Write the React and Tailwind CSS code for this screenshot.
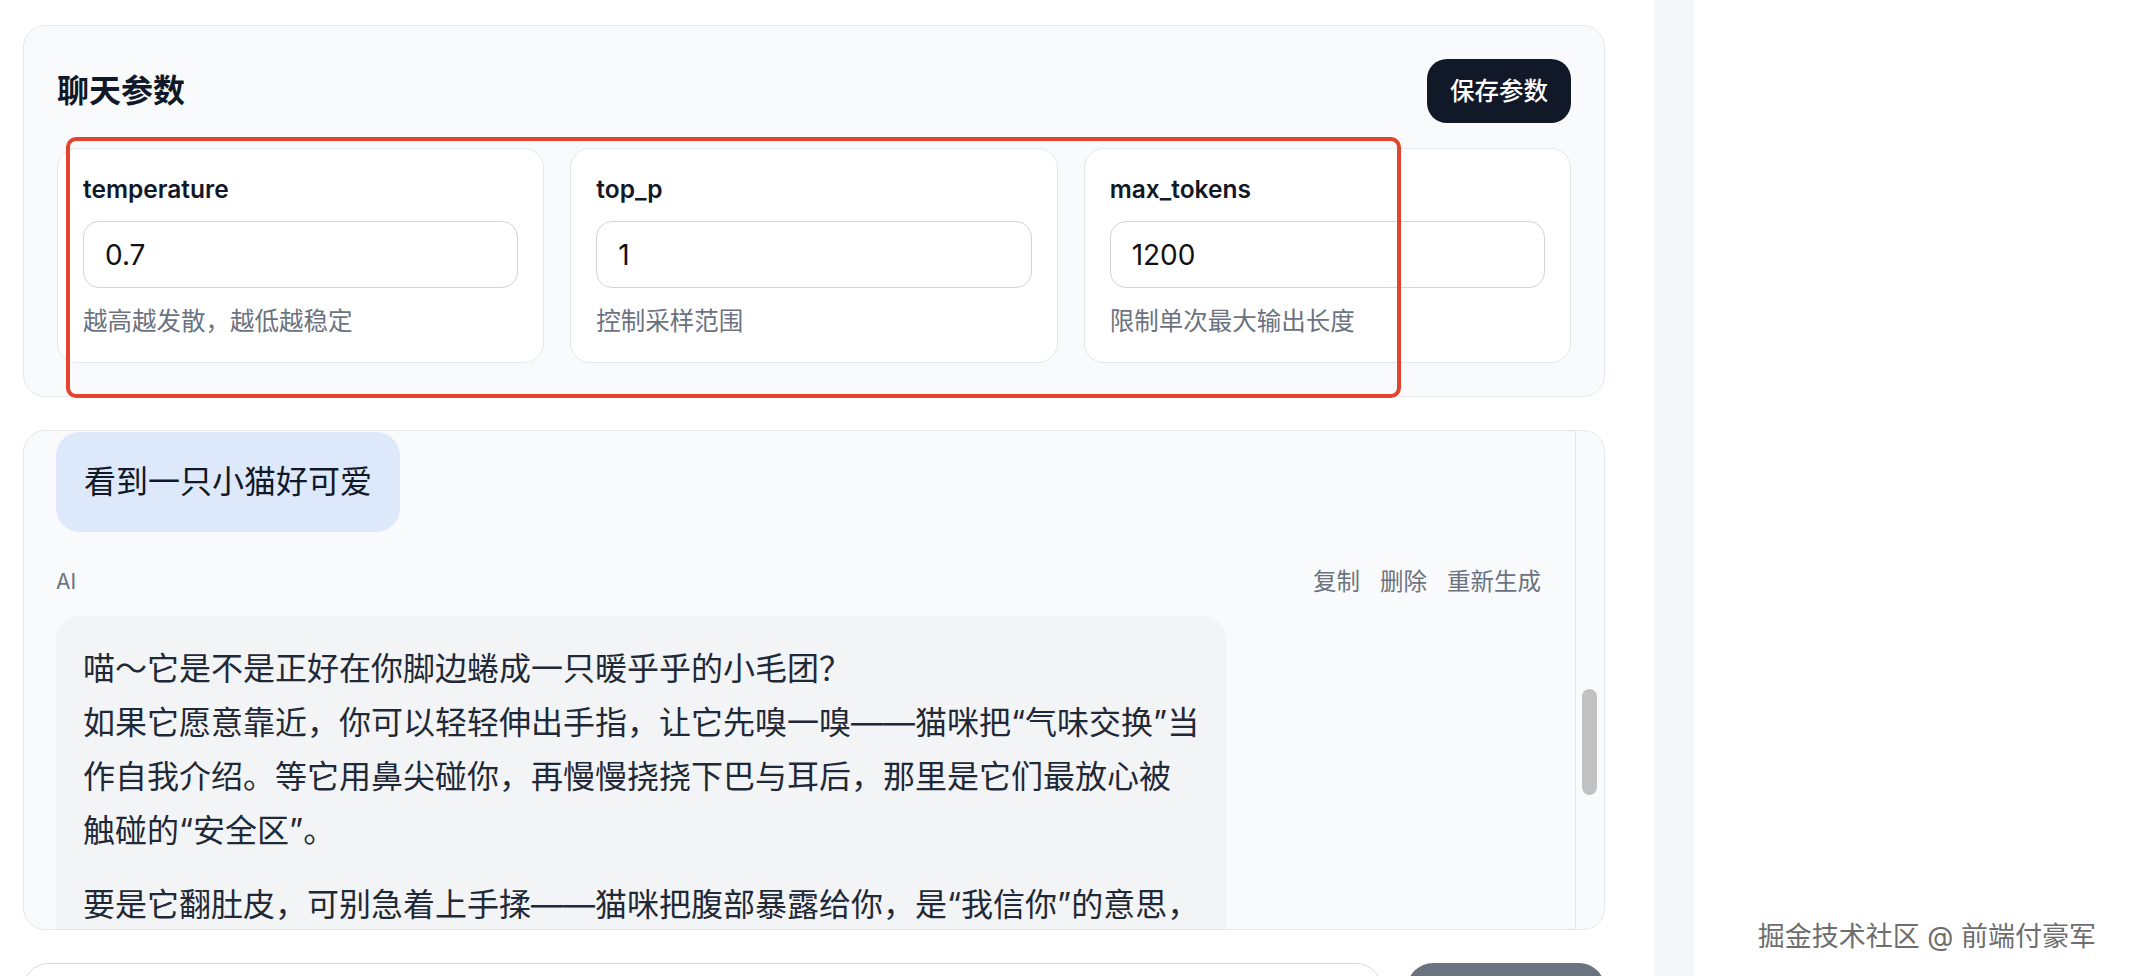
import React from 'react';

const params = [
    { key: 'temperature', value: '0.7', hint: '越高越发散，越低越稳定' },
    { key: 'top_p', value: '1', hint: '控制采样范围' },
    { key: 'max_tokens', value: '1200', hint: '限制单次最大输出长度' },
];

// lines kept as in the captured reply
const reply = [
    [
        '喵～它是不是正好在你脚边蜷成一只暖乎乎的小毛团？',
        '如果它愿意靠近，你可以轻轻伸出手指，让它先嗅一嗅——猫咪把“气味交换”当',
        '作自我介绍。等它用鼻尖碰你，再慢慢挠挠下巴与耳后，那里是它们最放心被',
        '触碰的“安全区”。',
    ],
    [
        '要是它翻肚皮，可别急着上手揉——猫咪把腹部暴露给你，是“我信你”的意思，',
        '并不一定是“请摸这里”。',
    ],
];

function ParamCard({ item }) {
    return (
        <div className="rounded-[20px] border border-[#e5e7eb] bg-white px-[25px] pt-[22px] pb-[23px]">
            <div className="text-[24.5px] font-semibold leading-[37px] text-[#111827]">{item.key}</div>
            <input
                defaultValue={item.value}
                className="mt-[13px] h-[67px] w-full rounded-[16px] border-[1.5px] border-[#d1d5db] bg-white px-[21px] text-[28px] text-[#111] outline-none"
            />
            <div className="mt-[15px] text-[24.5px] leading-[36px] text-[#6b7280]">{item.hint}</div>
        </div>
    );
}

export default function App() {
    return (
        <div className="flex h-[976px] w-[2134px] overflow-hidden bg-white font-[Inter,'Noto_Sans_CJK_SC',sans-serif]">
            <main className="w-[1654px] shrink-0 pl-[23px] pr-[49px] pt-[25px]">
                {/* params */}
                <section className="relative rounded-[22px] border border-[#e5e7eb] bg-[#f9fafb] px-[33px] pt-[33px] pb-[33px]">
                    <div className="flex items-center justify-between">
                        <h2 className="text-[32px] font-bold text-[#111827]">聊天参数</h2>
                        <button className="h-[64px] w-[144px] rounded-[20px] bg-[#111827] text-[24.5px] font-medium text-white">
                            保存参数
                        </button>
                    </div>
                    <div className="mt-[25px] grid grid-cols-3 gap-[26px]">
                        {params.map((p) => (
                            <ParamCard key={p.key} item={p} />
                        ))}
                    </div>
                    {/* annotation */}
                    <div className="pointer-events-none absolute left-[42px] top-[111px] h-[261px] w-[1335px] rounded-[10px] border-[4px] border-[#e4432d]" />
                </section>

                {/* chat */}
                <section className="mt-[33px] flex h-[500px] overflow-hidden rounded-[22px] border border-[#e5e7eb] bg-[#f9fafb]">
                    <div className="flex-1 overflow-hidden pl-[32px] pr-[34px]">
                        <div className="mt-[1px] inline-block rounded-[24px] bg-[#dde8fb] px-[28px] py-[23px] text-[32px] leading-[54px] text-[#111827]">
                            看到一只小猫好可爱
                        </div>
                        <div className="mt-[33px] flex items-center justify-between">
                            <span className="text-[21px] text-[#6b7280]">AI</span>
                            <div className="flex gap-[20px] text-[23.5px] leading-[34px] text-[#6b7280]">
                                <button>复制</button>
                                <button>删除</button>
                                <button>重新生成</button>
                            </div>
                        </div>
                        <div className="mt-[17px] w-[1170px] rounded-[24px] bg-[#f3f4f6] px-[27px] pt-[26px] pb-[26px] text-[32px] leading-[54px] text-[#1f2937]">
                            {reply.map((lines, i) => (
                                <p key={i} className={i > 0 ? 'mt-[20px] whitespace-nowrap' : 'whitespace-nowrap'}>
                                    {lines.map((l, j) => (
                                        <React.Fragment key={j}>
                                            {j > 0 && <br />}
                                            {l}
                                        </React.Fragment>
                                    ))}
                                </p>
                            ))}
                        </div>
                    </div>
                    <div className="w-[29px] shrink-0 border-l border-[#e5e7eb]">
                        <div className="ml-[6px] mt-[258px] h-[106px] w-[15px] rounded-full bg-[#c1c1c1]" />
                    </div>
                </section>

                {/* composer */}
                <div className="mt-[33px] flex gap-[25px]">
                    <textarea className="h-[70px] flex-1 resize-none rounded-[26px] border-[1.5px] border-[#d1d5db] bg-white px-[24px] py-[18px] text-[28px] outline-none" />
                    <button className="h-[70px] w-[198px] rounded-[26px] bg-[#6b7280] text-[26px] text-white">发送</button>
                </div>
            </main>
            <div className="w-[40px] shrink-0 bg-[#f5f7fa]" />
            <div className="relative flex-1">
                <span className="absolute bottom-[19px] right-[38px] text-[27px] text-[#6e6e6e] [text-shadow:1px_1px_0_#fff,-1px_-1px_0_#fff,1px_-1px_0_#fff,-1px_1px_0_#fff]">
                    掘金技术社区 @ 前端付豪军
                </span>
            </div>
        </div>
    );
}
